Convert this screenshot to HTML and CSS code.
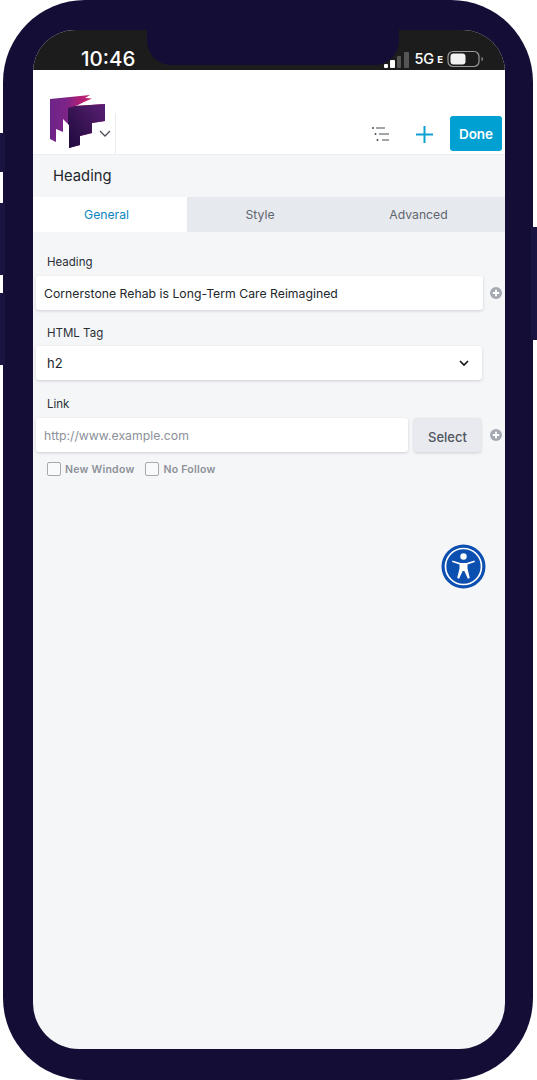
FILE: index.html
```html
<!DOCTYPE html>
<html lang="en">
<head>
<meta charset="utf-8">
<title>Heading settings</title>
<link rel="stylesheet" href="styles.css">
</head>
<body>
<div class="phone">
  <span class="hw hw-a"></span><span class="hw hw-b"></span><span class="hw hw-c"></span><span class="hw hw-d"></span>
  <div class="screen">
    <div class="status">
      <span class="time">10:46</span>
      <div class="status-right">
        <svg class="signal" width="25" height="16" viewBox="0 0 25 16"><rect x="0" y="12" width="4" height="4" rx="1" fill="#fff"/><rect x="6" y="8" width="5" height="8" rx="1" fill="#fff"/><rect x="13" y="4" width="4" height="12" rx="1" fill="#555"/><rect x="20" y="0" width="5" height="16" rx="1" fill="#555"/></svg>
        <span class="net">5G</span><span class="net-e">E</span>
        <svg width="37" height="18" viewBox="0 0 37 18"><rect x="1" y="1.500" width="31" height="15" rx="5" fill="none" stroke="#9a9a9a" stroke-width="1.200"/><rect x="3.500" y="3.500" width="15" height="11" rx="3" fill="#f2f2f2"/><path d="M34.500 7v4c1-.4 1.500-1.200 1.500-2s-.5-1.600-1.500-2z" fill="#8a8a8a"/></svg>
      </div>
    </div>
    <header class="toolbar">
      <svg class="logo" width="56" height="56" viewBox="0 0 56 56">
        <defs>
          <linearGradient id="base" x1="0" y1="0" x2="1" y2="0"><stop offset="0" stop-color="#6e2487"/><stop offset=".3" stop-color="#7d2488"/><stop offset=".55" stop-color="#b01f75"/><stop offset=".76" stop-color="#c81f6c"/></linearGradient>
          <linearGradient id="dark" x1="1" y1="0" x2="0" y2="1"><stop offset="0" stop-color="#5b1f74"/><stop offset=".6" stop-color="#34124f"/><stop offset="1" stop-color="#1e0a3c"/></linearGradient>
        </defs>
        <path d="M0 5 40 1 35 4 42 4.500 34 8 27 11.500 25 12 55 10V27L42 29V39L30 42V51L19 54V31L13 25V38L6 35V48L0 45z" fill="url(#base)"/>
        <path d="M18 14 25 12 55 10V27L42 29V39L30 42V51L19 54V31L18 30z" fill="url(#dark)"/>
      </svg>
      <svg class="caret" width="12" height="8" viewBox="0 0 12 8"><path d="M1 1l5 5 5-5" fill="none" stroke="#4a4f57" stroke-width="1.300"/></svg>
      <span class="brand-sep"></span>
      <div class="tools">
        <svg class="outline" width="18" height="14" viewBox="0 0 18 14"><g fill="none" stroke="#444b55" stroke-width="1.200"><path d="M4 1h9M7 7h10M10 13h7"/></g><g fill="#444b55"><circle cx="1" cy="1" r="1"/><circle cx="3.500" cy="7" r="1"/><circle cx="5.500" cy="13" r="1"/></g></svg>
        <svg class="plus" width="17" height="17" viewBox="0 0 17 17"><path d="M8.500 0v17M0 8.500h17" stroke="#0e9fd3" stroke-width="2" fill="none"/></svg>
        <button class="done">Done</button>
      </div>
    </header>
    <div class="panel-title">Heading</div>
    <nav class="tabs">
      <span class="tab tab-active">General</span>
      <span class="tab tab-style">Style</span>
      <span class="tab tab-adv">Advanced</span>
    </nav>
    <main class="form">
      <label class="label">Heading</label>
      <div class="row">
        <div class="field field-wide">Cornerstone Rehab is Long-Term Care Reimagined</div>
        <svg class="add" width="12" height="12" viewBox="0 0 12 12"><circle cx="6" cy="6" r="6" fill="#a5a9b1"/><path d="M6 2.800v6.400M2.800 6h6.400" stroke="#fff" stroke-width="1.800"/></svg>
      </div>
      <label class="label label-tag">HTML Tag</label>
      <div class="field field-select">
        <span>h2</span>
        <svg width="10" height="7" viewBox="0 0 10 7"><path d="M1 1l4 4 4-4" fill="none" stroke="#16181c" stroke-width="1.700"/></svg>
      </div>
      <label class="label label-link">Link</label>
      <div class="row">
        <div class="field field-link">http://www.example.com</div>
        <button class="select">Select</button>
        <svg class="add" width="12" height="12" viewBox="0 0 12 12"><circle cx="6" cy="6" r="6" fill="#a5a9b1"/><path d="M6 2.800v6.400M2.800 6h6.400" stroke="#fff" stroke-width="1.800"/></svg>
      </div>
      <div class="checks">
        <span class="check"><i class="box"></i>New Window</span>
        <span class="check"><i class="box"></i>No Follow</span>
      </div>
    </main>
    <svg class="a11y" width="45" height="45" viewBox="0 0 45 45">
      <circle cx="22.500" cy="22.500" r="22" fill="#0b4fb0"/>
      <circle cx="22.500" cy="22.500" r="18" fill="none" stroke="#fff" stroke-width="1.700"/>
      <circle cx="22.500" cy="12.500" r="3.200" fill="#fff"/>
      <path d="M11.500 16.500l8 2.500h6l8-2.500.4 1.500-7.400 2.600v3.900L28.800 34l-1.900.7L23.300 27h-1.600L18.100 34.700l-1.900-.7 2.300-9.500v-3.900L11.100 18z" fill="#fff"/>
    </svg>
  </div>
  <div class="notch"></div>
</div>
</body>
</html>
```
FILE: styles.css
```css
* { box-sizing: border-box; }
html, body { margin: 0; background: #fff; }
body { width: 537px; height: 1080px; overflow: hidden; font-family: Inter, "Liberation Sans", sans-serif; color: #23272c; }

.phone {
  position: relative;
  width: 530px;
  height: 1080px;
  margin-left: 3px;
  padding: 30px 28px 30px 30px;
  background: #140e36;
  border-radius: 82px;
}
.hw { position: absolute; background: #1a1440; }
.hw-a { left: -3px; top: 133px; width: 5px; height: 39px; }
.hw-b { left: -3px; top: 203px; width: 5px; height: 72px; }
.hw-c { left: -3px; top: 293px; width: 5px; height: 72px; }
.hw-d { right: -4px; top: 227px; width: 6px; height: 113px; }

.notch {
  position: absolute;
  left: 144px;
  top: 30px;
  width: 252px;
  height: 35px;
  background: #140e36;
  border-radius: 0 0 24px 24px;
}

.screen {
  position: relative;
  display: flex;
  flex-direction: column;
  height: 1019px;
  background: #f5f6f8;
  border-radius: 42px 42px 46px 46px;
  overflow: hidden;
}

.status {
  display: flex;
  flex: none;
  align-items: flex-end;
  justify-content: space-between;
  height: 40px;
  padding: 0 21px 0 48px;
  background: #1c1c1c;
  color: #fff;
}
.time { font: 500 20.500px/1 Inter, sans-serif; margin-bottom: 1px; }
.status-right { position: relative; z-index: 2; display: flex; align-items: center; height: 18px; margin-bottom: 2px; }
.signal { margin: 1px 5px 0 0; }
.net { font: 500 14.500px/1 Inter, sans-serif; }
.net-e { font: 700 9.500px/1 Inter, sans-serif; margin: 2px 4px 0 3px; }

.toolbar {
  display: flex;
  flex: none;
  align-items: flex-end;
  height: 85px;
  background: #fff;
  border-bottom: 1px solid #eceef1;
}
.logo { margin: 0 0 4px 17px; }
.caret { margin: 0 0 16px -7px; }
.brand-sep { width: 1px; height: 41px; margin-left: 4px; background: #e9ebee; }
.tools { display: flex; flex: 1; align-items: center; justify-content: flex-end; padding: 0 3px 3px 0; }
.outline { margin-right: 26px; }
.plus { margin: 2px 17px 0 0; }
.done {
  width: 52px;
  height: 35px;
  padding: 0;
  border: 0;
  border-radius: 3px;
  background: #00a0d2;
  color: #fff;
  font: 600 13.500px Inter, sans-serif;
}

.panel-title { flex: none; height: 42px; padding-left: 20px; font-size: 14.800px; line-height: 43px; color: #24282d; }

.tabs { display: flex; flex: none; height: 35px; background: #e6e9ee; font-size: 12.200px; line-height: 36px; color: #5f656d; text-align: center; }
.tab-active { width: 154px; padding-right: 7px; background: #fff; color: #0a85bd; }
.tab-style { width: 146px; }
.tab-adv { width: 171px; }

.form { display: flex; flex-direction: column; padding: 23px 0 0 3px; font-size: 12.250px; }
.label { height: 21px; padding-left: 11px; font-size: 11.500px; line-height: 15px; color: #2b3036; }
.label-tag { height: 20px; margin-top: 16px; }
.label-link { margin-top: 17px; }
.row { display: flex; align-items: center; }
.field {
  display: flex;
  align-items: center;
  height: 34px;
  padding-left: 8px;
  background: #fff;
  border-radius: 3px;
  box-shadow: 0 1px 3px rgba(40, 50, 70, .2);
}
.field-wide { width: 447px; }
.field-select { justify-content: space-between; width: 446px; padding: 0 13px 0 11px; font-size: 13px; }
.field-link { width: 372px; color: #8b9098; }
.add { margin-left: 7px; }
.select {
  width: 67px;
  height: 34px;
  margin-left: 6px;
  padding: 4px 0 0;
  border: 0;
  border-radius: 3px;
  background: #e8eaef;
  color: #4f555e;
  font: 500 13px Inter, sans-serif;
  box-shadow: 0 1px 3px rgba(40, 50, 70, .2);
}
.select + .add { margin-left: 9px; }

.checks { display: flex; gap: 11px; margin-top: 10px; padding-left: 11px; }
.check { display: flex; align-items: center; font-size: 10.500px; font-weight: 600; letter-spacing: .25px; color: #8c9199; }
.box { width: 14px; height: 14px; margin-right: 4px; background: #f9fafb; border: 1px solid #a5a9b0; border-radius: 2px; }

.a11y { position: absolute; left: 408px; top: 514px; }
```
